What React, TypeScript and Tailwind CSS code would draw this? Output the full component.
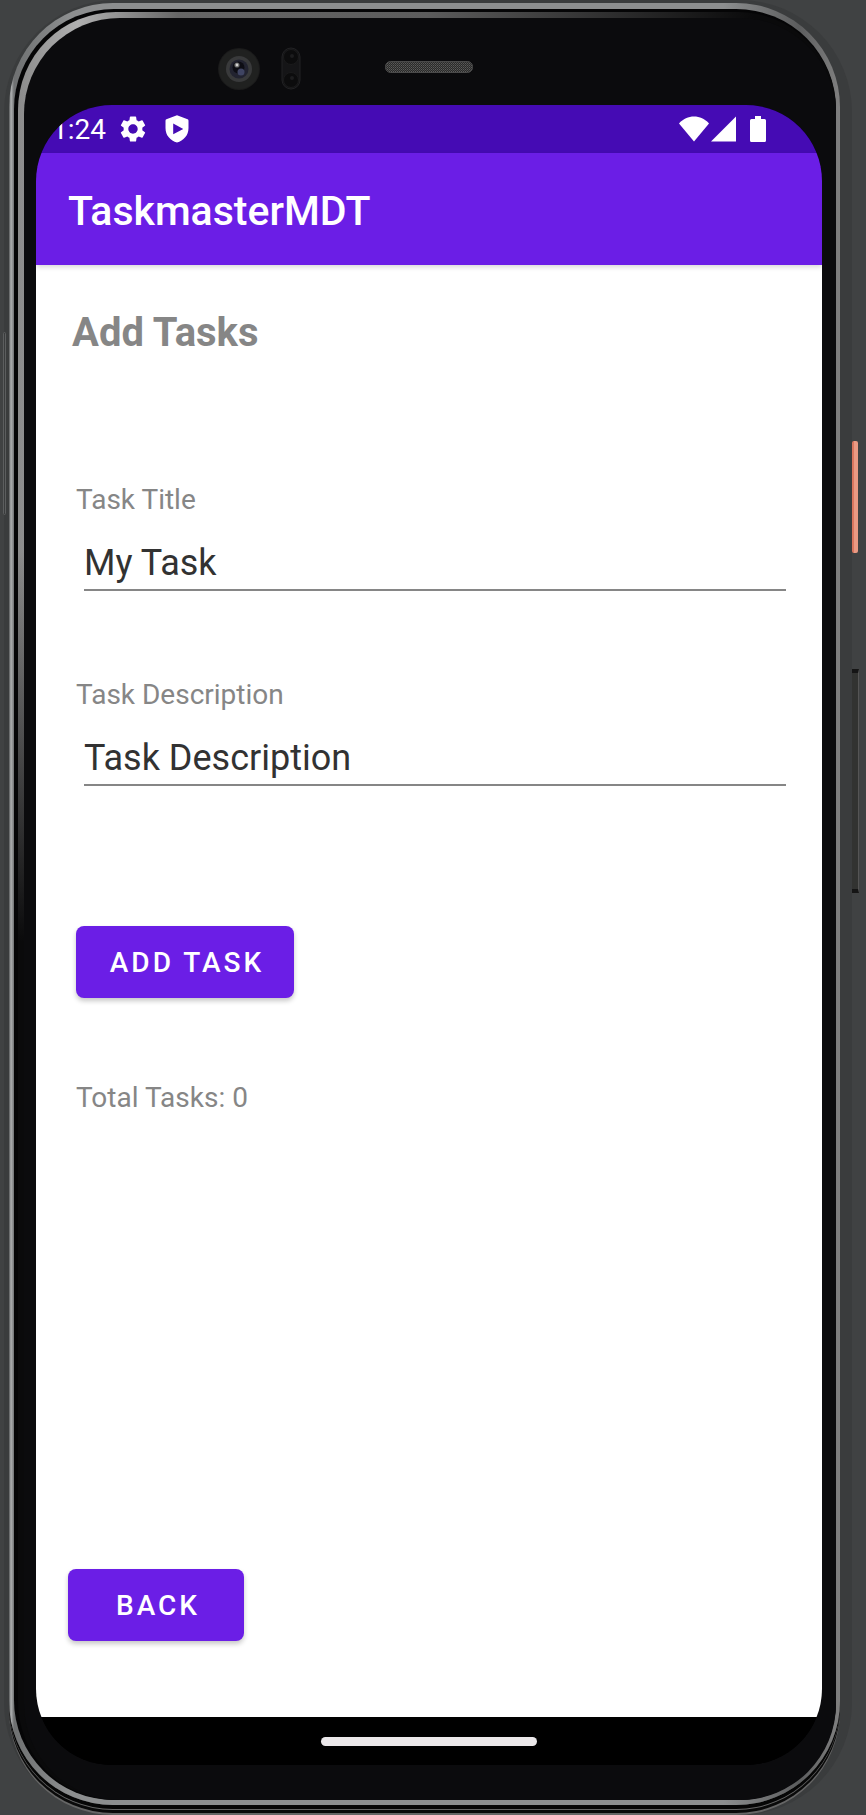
import { useState } from "react";
import type { FormEvent } from "react";

function FrontCamera() {
  return (
    <svg viewBox="0 0 44 44" className="h-11 w-11" aria-hidden="true">
      <circle cx="22" cy="22" r="21" fill="#1b1b1b" />
      <circle cx="22" cy="22" r="20" fill="#202120" />
      <circle cx="22" cy="22" r="13" fill="#393a3b" />
      <circle cx="22" cy="22" r="9.5" fill="#222330" />
      <circle cx="21.5" cy="20.5" r="6" fill="#0d0d14" />
      <circle cx="24" cy="25" r="3.5" fill="#3f4462" />
      <circle cx="20" cy="18" r="2.6" fill="#6a6a6a" />
      <circle cx="20" cy="18" r="1.4" fill="#d2d2d2" />
    </svg>
  );
}

function Sensors() {
  return (
    <svg viewBox="0 0 20 44" className="h-11 w-5" aria-hidden="true">
      <rect x="1" y="1" width="18" height="41" rx="9" fill="#151517" stroke="#222224" />
      <circle cx="10" cy="10" r="7.5" fill="#0c0c0d" stroke="#1a1a1b" />
      <circle cx="10" cy="33" r="7.5" fill="#0c0c0d" stroke="#1a1a1b" />
      <circle cx="11" cy="9" r="2" fill="#1d1d1e" />
      <circle cx="11" cy="31" r="2" fill="#1d1d1e" />
    </svg>
  );
}

function Speaker() {
  return (
    <svg viewBox="0 0 88 12" className="h-3 w-[88px]" aria-hidden="true">
      <defs>
        <pattern id="mesh" width="2" height="2" patternUnits="userSpaceOnUse">
          <rect width="2" height="2" fill="#2a2a2a" />
          <rect width="1" height="1" fill="#5c5c5a" />
          <rect x="1" y="1" width="1" height="1" fill="#4a4a48" />
        </pattern>
      </defs>
      <rect x="0.5" y="0.5" width="87" height="11" rx="5" fill="url(#mesh)" stroke="#4a4a4a" />
    </svg>
  );
}

function GearIcon() {
  return (
    <svg viewBox="2 2 20 20" className="h-[26px] w-[26px]" fill="currentColor" aria-hidden="true">
      <path d="M19.14 12.94c.04-.3.06-.61.06-.94 0-.32-.02-.64-.07-.94l2.03-1.58a.49.49 0 0 0 .12-.61l-1.92-3.32a.488.488 0 0 0-.59-.22l-2.39.96c-.5-.38-1.03-.7-1.62-.94l-.36-2.54a.484.484 0 0 0-.48-.41h-3.84c-.24 0-.43.17-.47.41l-.36 2.54c-.59.24-1.13.57-1.62.94l-2.39-.96c-.22-.08-.47 0-.59.22L2.74 8.87c-.12.21-.08.47.12.61l2.03 1.58c-.05.3-.09.63-.09.94s.02.64.07.94l-2.03 1.58a.49.49 0 0 0-.12.61l1.92 3.32c.12.22.37.29.59.22l2.39-.96c.5.38 1.03.7 1.62.94l.36 2.54c.05.24.24.41.48.41h3.84c.24 0 .44-.17.47-.41l.36-2.54c.59-.24 1.13-.56 1.62-.94l2.39.96c.22.08.47 0 .59-.22l1.92-3.32c.12-.22.07-.47-.12-.61l-2.01-1.58zM12 15.6c-1.98 0-3.6-1.62-3.6-3.6s1.62-3.6 3.6-3.6 3.6 1.62 3.6 3.6-1.62 3.6-3.6 3.6z" />
    </svg>
  );
}

function ShieldPlayIcon() {
  return (
    <svg viewBox="0 0 24 28" className="h-7 w-6" fill="currentColor" aria-hidden="true">
      <path
        fillRule="evenodd"
        d="M12 0.3 L22.6 4.3 Q23.5 4.7 23.5 5.7 V13 C23.5 20.5 18.5 25.6 12 27.6 C5.5 25.6 0.5 20.5 0.5 13 V5.7 Q0.5 4.7 1.4 4.3 Z M8.2 8.6 V19.2 L18.3 13.9 Z"
      />
    </svg>
  );
}

function StatusIcons() {
  return (
    <div className="flex items-center text-white">
      <svg viewBox="0 0 30 26" className="h-[26px] w-[30px]" fill="currentColor" aria-hidden="true">
        <path d="M0 7.5 C8 -1.8 22 -1.8 30 7.5 L15 25.5 Z" />
      </svg>
      <svg viewBox="0 0 26 26" className="ml-0.5 h-[26px] w-[26px]" fill="currentColor" aria-hidden="true">
        <path d="M25 0.5 V25.5 H0 Z" />
      </svg>
      <svg viewBox="0 0 16 26" className="ml-[13px] h-[26px] w-4" fill="currentColor" aria-hidden="true">
        <path d="M5 0 H11 V3 H14.5 Q16 3 16 4.5 V24.5 Q16 26 14.5 26 H1.5 Q0 26 0 24.5 V4.5 Q0 3 1.5 3 H5 Z" />
      </svg>
    </div>
  );
}

function StatusBar() {
  return (
    <div className="flex h-12 items-center justify-between bg-[#450bb4] pr-14 pl-4">
      <div className="flex items-center text-white">
        <span className="pt-0.5 text-[28px] leading-8">1:24</span>
        <span className="ml-3.5 flex items-center gap-[19px]">
          <GearIcon />
          <ShieldPlayIcon />
        </span>
      </div>
      <StatusIcons />
    </div>
  );
}

type FieldProps = {
  id: string;
  label: string;
  value: string;
  onChange: (value: string) => void;
};

function Field({ id, label, value, onChange }: FieldProps) {
  return (
    <div className="flex flex-col">
      <label htmlFor={id} className="text-[28px] leading-9 text-[#868686]">
        {label}
      </label>
      <input
        id={id}
        type="text"
        value={value}
        onChange={(event) => onChange(event.target.value)}
        className="mt-4 ml-2 h-[57px] border-b-2 border-[#868686] bg-transparent pt-[3px] text-[36px] leading-[48px] text-[#323232] outline-none"
      />
    </div>
  );
}

const buttonClass =
  "h-[72px] rounded-lg bg-[#6b1ee6] pt-0.5 pl-1 text-[28px] font-medium tracking-[3px] text-white shadow-[0_3px_5px_rgba(0,0,0,0.22)]";

function AddTaskScreen() {
  const [title, setTitle] = useState("My Task");
  const [description, setDescription] = useState("Task Description");
  const [total, setTotal] = useState(0);

  const addTask = (event: FormEvent) => {
    event.preventDefault();
    setTotal(total + 1);
  };

  return (
    <main className="flex flex-1 flex-col bg-white pt-[41px] pr-9 pb-[76px] pl-8">
      <h2 className="ml-1 text-[40px] leading-[54px] font-bold text-[#868686]">Add Tasks</h2>
      <form onSubmit={addTask} className="mt-[122px] ml-2 flex flex-col">
        <div className="flex flex-col gap-[86px]">
          <Field id="task-title" label="Task Title" value={title} onChange={setTitle} />
          <Field id="task-description" label="Task Description" value={description} onChange={setDescription} />
        </div>
        <button type="submit" className={`${buttonClass} mt-[140px] w-[218px] self-start`}>
          ADD TASK
        </button>
      </form>
      <p className="mt-[82px] ml-2 text-[28px] leading-9 text-[#868686]">Total Tasks: {total}</p>
      <button type="button" className={`${buttonClass} mt-auto w-[176px] self-start`}>
        BACK
      </button>
    </main>
  );
}

export default function App() {
  return (
    <div className="relative flex min-h-screen flex-col overflow-hidden bg-[#404243] pr-[14px] pl-1 font-[Roboto,'Liberation_Sans',sans-serif]">
      <div className="flex flex-1 flex-col rounded-[112px] bg-[#3a3c3d] pt-[3px] pr-3 pb-[10px] pl-[5px]">
        <div className="flex flex-1 flex-col rounded-[104px] bg-[linear-gradient(to_right,#555758,#b0b2b3_2px,#6f7172_5px,#8c8e8f_60px,#8c8e8f_86%,#5c5d5e_95%,#808080)] pt-[6px] pr-1 pb-[5px] pl-[5px] shadow-[0_4px_0_#060606,0_5px_0_#666,0_8px_0_#0a0a0a,0_10px_0_#666]">
          <div className="flex flex-1 flex-col rounded-[100px] bg-[#050506] pt-[3px] pl-1">
            <div className="flex flex-1 flex-col rounded-[98px] bg-[linear-gradient(to_bottom,transparent_30%,#0a0a0b_52%),linear-gradient(to_right,#8b8b8b,#b0b0b0_60px,#666_160px,#5c5c5c_50%,#0a0a0b_90%)] pt-[6px] pl-[6px]">
              <div className="flex flex-1 flex-col rounded-[96px] bg-[#0b0b0d] pr-[14px] pb-[35px] pl-3">
                <div className="flex h-[87px] items-center pl-[181px]">
                  <div className="mt-[15px] flex items-start">
                    <FrontCamera />
                    <span className="ml-5">
                      <Sensors />
                    </span>
                    <span className="mt-[14px] ml-[84px]">
                      <Speaker />
                    </span>
                  </div>
                </div>
                <div className="flex flex-1 flex-col overflow-hidden rounded-[76px] bg-black">
                  <StatusBar />
                  <header className="z-10 flex h-28 items-center bg-[#6b1ee6] px-8 pt-1 shadow-[0_2px_5px_rgba(0,0,0,0.16)]">
                    <h1 className="text-[41px] leading-[52px] font-medium text-white">TaskmasterMDT</h1>
                  </header>
                  <AddTaskScreen />
                  <div className="flex h-12 items-center justify-center bg-black">
                    <span className="h-[9px] w-[216px] rounded-full bg-[#ebe8ea]" />
                  </div>
                </div>
              </div>
            </div>
          </div>
        </div>
      </div>
      <span className="absolute top-[441px] right-2 h-[112px] w-[6px] rounded-[2px] border-l-2 border-[#d9765f] bg-[#ea9a84]" />
      <span className="absolute top-[669px] right-[7px] h-[224px] w-[7px] border-t-4 border-r border-b-4 border-t-[#151515] border-r-[#555] border-b-[#151515] bg-[#323331]" />
      <span className="absolute top-[332px] left-[3px] h-[183px] w-[3px] rounded-full border border-[#5c5e5f]" />
    </div>
  );
}
